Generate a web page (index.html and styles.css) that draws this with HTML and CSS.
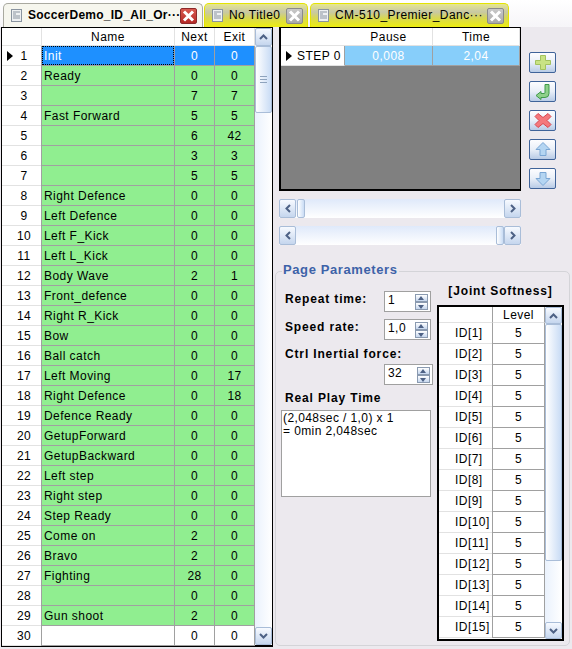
FILE: index.html
```html
<!DOCTYPE html>
<html>
<head>
<meta charset="UTF-8">
<title>Action Editor</title>
<link rel="stylesheet" href="styles.css">
</head>
<body>
<div class="tabs">
  <div class="tab tab-active">
    <svg class="doc" width="11" height="13" viewBox="0 0 11 13"><rect x=".5" y=".5" width="10" height="12" fill="#eef0f2" stroke="#8a94a0"/><path d="M2 3h7M2 5h3M2 7h7M2 9h7" stroke="#8a94a0"/></svg>
    <span class="tab-title">SoccerDemo_ID_All_Or···</span>
    <span class="close close-red"><svg width="13" height="12" viewBox="0 0 13 12"><path d="M2 1.500l9 9M11 1.500l-9 9" stroke="#fff" stroke-width="3"/></svg></span>
  </div>
  <div class="tab tab-no">
    <svg class="doc" width="11" height="13" viewBox="0 0 11 13"><rect x=".5" y=".5" width="10" height="12" fill="#eef0f2" stroke="#8a94a0"/><path d="M2 3h7M2 5h3M2 7h7M2 9h7" stroke="#8a94a0"/></svg>
    <span class="tab-title">No Title0</span>
    <span class="close"><svg width="13" height="12" viewBox="0 0 13 12"><path d="M2 1.500l9 9M11 1.500l-9 9" stroke="#fff" stroke-width="3"/></svg></span>
  </div>
  <div class="tab tab-cm">
    <svg class="doc" width="11" height="13" viewBox="0 0 11 13"><rect x=".5" y=".5" width="10" height="12" fill="#eef0f2" stroke="#8a94a0"/><path d="M2 3h7M2 5h3M2 7h7M2 9h7" stroke="#8a94a0"/></svg>
    <span class="tab-title">CM-510_Premier_Danc···</span>
    <span class="close"><svg width="13" height="12" viewBox="0 0 13 12"><path d="M2 1.500l9 9M11 1.500l-9 9" stroke="#fff" stroke-width="3"/></svg></span>
  </div>
</div>

<div class="main">
  <div class="grid page-grid">
    <div class="grid-body">
      <div class="row head"><span class="hcell"></span><span class="cell name">Name</span><span class="cell">Next</span><span class="cell">Exit</span></div>
      <div class="row sel"><span class="hcell"><i class="arrow"></i>1</span><span class="cell name"><b class="focus">Init</b></span><span class="cell">0</span><span class="cell">0</span></div>
      <div class="row"><span class="hcell">2</span><span class="cell name">Ready</span><span class="cell">0</span><span class="cell">0</span></div>
      <div class="row"><span class="hcell">3</span><span class="cell name"></span><span class="cell">7</span><span class="cell">7</span></div>
      <div class="row"><span class="hcell">4</span><span class="cell name">Fast Forward</span><span class="cell">5</span><span class="cell">5</span></div>
      <div class="row"><span class="hcell">5</span><span class="cell name"></span><span class="cell">6</span><span class="cell">42</span></div>
      <div class="row"><span class="hcell">6</span><span class="cell name"></span><span class="cell">3</span><span class="cell">3</span></div>
      <div class="row"><span class="hcell">7</span><span class="cell name"></span><span class="cell">5</span><span class="cell">5</span></div>
      <div class="row"><span class="hcell">8</span><span class="cell name">Right Defence</span><span class="cell">0</span><span class="cell">0</span></div>
      <div class="row"><span class="hcell">9</span><span class="cell name">Left Defence</span><span class="cell">0</span><span class="cell">0</span></div>
      <div class="row"><span class="hcell">10</span><span class="cell name">Left F_Kick</span><span class="cell">0</span><span class="cell">0</span></div>
      <div class="row"><span class="hcell">11</span><span class="cell name">Left L_Kick</span><span class="cell">0</span><span class="cell">0</span></div>
      <div class="row"><span class="hcell">12</span><span class="cell name">Body Wave</span><span class="cell">2</span><span class="cell">1</span></div>
      <div class="row"><span class="hcell">13</span><span class="cell name">Front_defence</span><span class="cell">0</span><span class="cell">0</span></div>
      <div class="row"><span class="hcell">14</span><span class="cell name">Right R_Kick</span><span class="cell">0</span><span class="cell">0</span></div>
      <div class="row"><span class="hcell">15</span><span class="cell name">Bow</span><span class="cell">0</span><span class="cell">0</span></div>
      <div class="row"><span class="hcell">16</span><span class="cell name">Ball catch</span><span class="cell">0</span><span class="cell">0</span></div>
      <div class="row"><span class="hcell">17</span><span class="cell name">Left Moving</span><span class="cell">0</span><span class="cell">17</span></div>
      <div class="row"><span class="hcell">18</span><span class="cell name">Right Defence</span><span class="cell">0</span><span class="cell">18</span></div>
      <div class="row"><span class="hcell">19</span><span class="cell name">Defence Ready</span><span class="cell">0</span><span class="cell">0</span></div>
      <div class="row"><span class="hcell">20</span><span class="cell name">GetupForward</span><span class="cell">0</span><span class="cell">0</span></div>
      <div class="row"><span class="hcell">21</span><span class="cell name">GetupBackward</span><span class="cell">0</span><span class="cell">0</span></div>
      <div class="row"><span class="hcell">22</span><span class="cell name">Left step</span><span class="cell">0</span><span class="cell">0</span></div>
      <div class="row"><span class="hcell">23</span><span class="cell name">Right step</span><span class="cell">0</span><span class="cell">0</span></div>
      <div class="row"><span class="hcell">24</span><span class="cell name">Step Ready</span><span class="cell">0</span><span class="cell">0</span></div>
      <div class="row"><span class="hcell">25</span><span class="cell name">Come on</span><span class="cell">2</span><span class="cell">0</span></div>
      <div class="row"><span class="hcell">26</span><span class="cell name">Bravo</span><span class="cell">2</span><span class="cell">0</span></div>
      <div class="row"><span class="hcell">27</span><span class="cell name">Fighting</span><span class="cell">28</span><span class="cell">0</span></div>
      <div class="row"><span class="hcell">28</span><span class="cell name"></span><span class="cell">0</span><span class="cell">0</span></div>
      <div class="row"><span class="hcell">29</span><span class="cell name">Gun shoot</span><span class="cell">2</span><span class="cell">0</span></div>
      <div class="row blank"><span class="hcell">30</span><span class="cell name"></span><span class="cell">0</span><span class="cell">0</span></div>
    </div>
    <div class="vscroll">
      <span class="sbtn"><svg width="9" height="6" viewBox="0 0 9 6"><path d="M1 5l3.500-3.500L8 5" fill="none" stroke="#4d6185" stroke-width="2"/></svg></span>
      <span class="vthumb"><i></i></span>
      <span class="vtrack"></span>
      <span class="sbtn"><svg width="9" height="6" viewBox="0 0 9 6"><path d="M1 1l3.500 3.500L8 1" fill="none" stroke="#4d6185" stroke-width="2"/></svg></span>
    </div>
  </div>

  <div class="side">
    <div class="step-area">
      <div class="grid step-grid">
        <div class="srow shead"><span class="hcell"></span><span class="cell">Pause</span><span class="cell">Time</span></div>
        <div class="srow ssel"><span class="hcell"><i class="arrow"></i>STEP 0</span><span class="cell">0,008</span><span class="cell">2,04</span></div>
      </div>
      <div class="tools">
        <span class="tool"><svg width="18" height="17" viewBox="0 0 18 17"><path d="M6.500 1.500h5v5h5v4h-5v5h-5v-5h-5v-4h5z" fill="#c9e384" stroke="#a3c25f"/></svg></span>
        <span class="tool"><svg width="18" height="17" viewBox="0 0 18 17"><path d="M11 1.500h4v9q0 4-4 4H7v2l-5-4 5-4v2h3q1 0 1-1z" fill="#8ed08a" stroke="#3f9a4a"/></svg></span>
        <span class="tool"><svg width="18" height="17" viewBox="0 0 18 17"><path d="M4 1.500L9 5.500l5-4 3 3-4 4 4 4-3 3-5-4-5 4-3-3 4-4-4-4z" fill="#f4787c" stroke="#d9474f"/></svg></span>
        <span class="tool"><svg width="18" height="17" viewBox="0 0 18 17"><path d="M9 1.500l7 7h-4v6H6v-6H2z" fill="#b4d5f2" stroke="#7aa6d4"/></svg></span>
        <span class="tool"><svg width="18" height="17" viewBox="0 0 18 17"><path d="M9 15.500l7-7h-4v-6H6v6H2z" fill="#b4d5f2" stroke="#7aa6d4"/></svg></span>
      </div>
    </div>

    <div class="hscroll">
      <span class="sbtn-h"><svg width="6" height="9" viewBox="0 0 6 9"><path d="M5 1L1.500 4.500 5 8" fill="none" stroke="#4d6185" stroke-width="2"/></svg></span>
      <span class="hthumb"></span>
      <span class="htrack"></span>
      <span class="sbtn-h"><svg width="6" height="9" viewBox="0 0 6 9"><path d="M1 1l3.500 3.500L1 8" fill="none" stroke="#4d6185" stroke-width="2"/></svg></span>
    </div>
    <div class="hscroll">
      <span class="sbtn-h"><svg width="6" height="9" viewBox="0 0 6 9"><path d="M5 1L1.500 4.500 5 8" fill="none" stroke="#4d6185" stroke-width="2"/></svg></span>
      <span class="htrack"></span>
      <span class="hthumb"></span>
      <span class="sbtn-h"><svg width="6" height="9" viewBox="0 0 6 9"><path d="M1 1l3.500 3.500L1 8" fill="none" stroke="#4d6185" stroke-width="2"/></svg></span>
    </div>

    <div class="params">
      <div class="legend">Page Parameters</div>
      <div class="params-left">
        <div class="field"><label>Repeat time:</label><div class="spin"><span>1</span><em class="arrows"><i class="up"></i><i class="down"></i></em></div></div>
        <div class="field"><label>Speed rate:</label><div class="spin"><span>1,0</span><em class="arrows"><i class="up"></i><i class="down"></i></em></div></div>
        <label class="wide">Ctrl Inertial force:</label>
        <div class="field end"><div class="spin spin-wide"><span>32</span><em class="arrows"><i class="up"></i><i class="down"></i></em></div></div>
        <label class="wide play">Real Play Time</label>
        <div class="playbox">(2,048sec / 1,0) x 1<br>= 0min 2,048sec</div>
      </div>
      <div class="params-right">
        <div class="joint-title">[Joint Softness]</div>
        <div class="grid joint">
          <div class="joint-body">
            <div class="jrow jhead"><span class="hcell"></span><span class="cell">Level</span></div>
            <div class="jrow"><span class="hcell">ID[1]</span><span class="cell">5</span></div>
            <div class="jrow"><span class="hcell">ID[2]</span><span class="cell">5</span></div>
            <div class="jrow"><span class="hcell">ID[3]</span><span class="cell">5</span></div>
            <div class="jrow"><span class="hcell">ID[4]</span><span class="cell">5</span></div>
            <div class="jrow"><span class="hcell">ID[5]</span><span class="cell">5</span></div>
            <div class="jrow"><span class="hcell">ID[6]</span><span class="cell">5</span></div>
            <div class="jrow"><span class="hcell">ID[7]</span><span class="cell">5</span></div>
            <div class="jrow"><span class="hcell">ID[8]</span><span class="cell">5</span></div>
            <div class="jrow"><span class="hcell">ID[9]</span><span class="cell">5</span></div>
            <div class="jrow"><span class="hcell">ID[10]</span><span class="cell">5</span></div>
            <div class="jrow"><span class="hcell">ID[11]</span><span class="cell">5</span></div>
            <div class="jrow"><span class="hcell">ID[12]</span><span class="cell">5</span></div>
            <div class="jrow"><span class="hcell">ID[13]</span><span class="cell">5</span></div>
            <div class="jrow"><span class="hcell">ID[14]</span><span class="cell">5</span></div>
            <div class="jrow"><span class="hcell">ID[15]</span><span class="cell">5</span></div>
          </div>
          <div class="vscroll">
            <span class="sbtn"><svg width="9" height="6" viewBox="0 0 9 6"><path d="M1 5l3.500-3.500L8 5" fill="none" stroke="#4d6185" stroke-width="2"/></svg></span>
            <span class="jthumb"></span>
            <span class="vtrack"></span>
            <span class="sbtn"><svg width="9" height="6" viewBox="0 0 9 6"><path d="M1 1l3.500 3.500L8 1" fill="none" stroke="#4d6185" stroke-width="2"/></svg></span>
          </div>
        </div>
      </div>
    </div>
  </div>
</div>
</body>
</html>
```
FILE: styles.css
```css
* {
  box-sizing: border-box;
}
body {
  margin: 0;
  width: 572px;
  height: 649px;
  overflow: hidden;
  background: #ece9ee;
  font-family: "Liberation Sans", Arial, sans-serif;
  font-size: 12px;
  letter-spacing: .45px;
  color: #000;
}

/* tabs */
.tabs {
  height: 27px;
  display: flex;
  align-items: flex-end;
  padding-left: 3px;
  background: linear-gradient(#fff, #f6f5f8);
}
.tab {
  height: 24px;
  display: flex;
  align-items: center;
  padding: 0 4px 0 7px;
  border: 1px solid #e4e400;
  border-bottom: none;
  border-radius: 5px 5px 0 0;
  background: linear-gradient(#e6e690, #c8c8a4 35%, #d8d850 62%, #eeee10);
}
.tab-active {
  width: 200px;
  height: 24px;
  margin-right: 1px;
  padding: 0 5px 0 7px;
  border-color: #a9a9a0;
  background: #f6f6ee;
  font-weight: bold;
  letter-spacing: .25px;
}
.tab-no {
  width: 104px;
  margin-right: 2px;
}
.tab-cm {
  width: 199px;
}
.doc {
  flex: none;
  margin-right: 6px;
}
.tab-title {
  flex: 1;
  margin-top: -2px;
  white-space: nowrap;
  overflow: hidden;
}
.close {
  width: 17px;
  height: 16px;
  flex: none;
  display: flex;
  align-items: center;
  justify-content: center;
  border: 1px solid #8a8a8a;
  border-radius: 2px;
  background: linear-gradient(#c9c9c9, #a9a9a9);
}
.close-red {
  border-color: #8c2a2a;
  background: linear-gradient(#d85a50, #b52a25);
}

/* grids */
.main {
  display: flex;
  height: 622px;
}
.grid {
  border: 2px solid #000;
  border-left-width: 1px;
  display: flex;
  background: #fff;
}
.page-grid {
  width: 272px;
  height: 620px;
  flex: none;
  margin-left: 1px;
  border-top-width: 1px;
}
.grid-body {
  width: 253px;
  flex: none;
}
.row {
  display: grid;
  grid-template-columns: 39px 134px 40px 40px;
  height: 20px;
}
.row.head {
  height: 18px;
}
.row .cell {
  background: #90ee90;
}
.row.sel .cell {
  background: #1e90ff;
  color: #fff;
}
.row.blank .cell,
.row.head .cell {
  background: #fff;
}
.cell {
  display: flex;
  align-items: center;
  justify-content: center;
  border-right: 1px solid #a0a0a0;
  border-bottom: 1px solid #a0a0a0;
  white-space: nowrap;
}
.cell.name {
  justify-content: flex-start;
  padding-left: 2px;
  border-left: 1px solid #a0a0a0;
}
.head .cell,
.shead .cell,
.jhead .cell {
  border-color: #e2e2e2;
  justify-content: center;
  padding: 0;
}
.hcell {
  position: relative;
  display: flex;
  align-items: center;
  justify-content: center;
  padding-left: 5px;
  border-bottom: 1px solid #e2e2e2;
  white-space: nowrap;
}
.arrow {
  position: absolute;
  left: 5px;
  top: 5px;
  border-left: 6px solid #000;
  border-top: 5px solid transparent;
  border-bottom: 5px solid transparent;
}
.focus {
  font-weight: normal;
  align-self: stretch;
  flex: 1;
  display: flex;
  align-items: center;
  margin-left: -2px;
  padding-left: 2px;
  outline: 1px dotted #000;
  outline-offset: -1px;
}

/* scrollbars */
.vscroll {
  width: 17px;
  flex: none;
  display: flex;
  flex-direction: column;
  background: linear-gradient(90deg, #eaf2fd, #fff);
}
.sbtn,
.sbtn-h {
  flex: none;
  display: flex;
  align-items: center;
  justify-content: center;
  border: 1px solid #a9bdd8;
  border-radius: 2px;
  background: linear-gradient(#f7faff, #c5d6ee);
}
.sbtn {
  height: 18px;
}
.vthumb {
  height: 67px;
  display: flex;
  align-items: center;
  justify-content: center;
  border: 1px solid #a9bdd8;
  border-radius: 2px;
  background: linear-gradient(90deg, #fff, #c9dcf5);
}
.vthumb i {
  width: 7px;
  height: 7px;
  border-top: 1px solid #8ea3bd;
  border-bottom: 1px solid #8ea3bd;
  background: linear-gradient(#8ea3bd, #8ea3bd) center / 100% 1px no-repeat;
}
.jthumb {
  height: 237px;
  border: 1px solid #a9bdd8;
  border-radius: 2px;
  background: linear-gradient(90deg, #fff, #c9dcf5);
}
.vtrack {
  flex: 1;
}
.side {
  width: 299px;
  padding: 0 0 0 6px;
}
.step-area {
  display: flex;
}
.step-grid {
  width: 242px;
  height: 164px;
  flex: none;
  display: block;
  background: #808080;
  border-width: 1px 1px 2px 2px;
}
.srow {
  display: grid;
  grid-template-columns: 64px 88px 87px;
  height: 20px;
}
.srow.shead {
  height: 18px;
  background: #fff;
}
.srow.shead .cell {
  background: #fff;
}
.ssel .hcell {
  background: #fff;
  padding-left: 16px;
  justify-content: flex-start;
  border-right: 1px solid #a0a0a0;
}
.ssel .cell {
  background: #87cefa;
  color: #fff;
}
.tools {
  width: 27px;
  margin: 25px 0 0 8px;
  display: flex;
  flex-direction: column;
  gap: 8px;
}
.tool {
  height: 21px;
  display: flex;
  align-items: center;
  justify-content: center;
  border: 1px solid #3f6399;
  border-radius: 2px;
  background: linear-gradient(#fdfdff, #e9eff8 50%, #b8cbe6);
}
.hscroll {
  width: 242px;
  height: 19px;
  margin-top: 8px;
  display: flex;
  background: linear-gradient(#dfe9fa, #fff);
}
.sbtn-h {
  width: 17px;
}
.hthumb {
  width: 8px;
  flex: none;
  margin: 0 0 0 1px;
  border: 1px solid #a9bdd8;
  border-radius: 2px;
  background: linear-gradient(90deg, #fff, #c9dcf5);
}
.htrack {
  flex: 1;
}

/* page parameters */
.params {
  position: relative;
  width: 295px;
  height: 375px;
  margin: 26px 0 0 -4px;
  padding: 12px 0 0 5px;
  display: flex;
  border: 1px solid #d4d4d8;
  border-radius: 5px;
}
.legend {
  position: absolute;
  left: 6px;
  top: -10px;
  padding: 0 1px;
  background: #ece9ee;
  color: #3d62a8;
  font-weight: bold;
  font-size: 13px;
  letter-spacing: .6px;
}
label {
  font-weight: bold;
  white-space: nowrap;
  letter-spacing: .85px;
}
.params-left {
  width: 156px;
  flex: none;
  padding-top: 7px;
}
.field {
  height: 28px;
  display: flex;
  justify-content: space-between;
  padding-right: 6px;
}
.field label {
  margin: 1px 0 0 4px;
}
.field.end {
  justify-content: flex-end;
  padding-right: 4px;
  height: 27px;
}
.wide {
  display: block;
  margin-left: 4px;
  height: 17px;
}
.play {
  height: 19px;
}
.spin {
  width: 47px;
  height: 21px;
  display: flex;
  justify-content: space-between;
  padding: 1px 2px 0 3px;
  border: 1px solid #a0a0a0;
  background: #fff;
}
.spin-wide {
  width: 49px;
}
.arrows {
  width: 13px;
  display: flex;
  flex-direction: column;
  margin: 1px 0;
}
.arrows i {
  flex: 1;
  border: 1px solid #8a9ab0;
  background: linear-gradient(#fff, #c5d6ee);
  position: relative;
}
.arrows .up::after,
.arrows .down::after {
  content: "";
  position: absolute;
  left: 2px;
  border-left: 3.5px solid transparent;
  border-right: 3.5px solid transparent;
}
.arrows .up::after {
  top: 1px;
  border-bottom: 4px solid #4d6185;
}
.arrows .down::after {
  top: 2px;
  border-top: 4px solid #4d6185;
}
.playbox {
  width: 150px;
  height: 87px;
  padding: 1px 0 0 1px;
  border: 1px solid #a0a0a0;
  background: #fff;
  line-height: 13px;
  letter-spacing: .4px;
}
.params-right {
  width: 127px;
  flex: none;
}
.joint-title {
  height: 21px;
  text-align: center;
  font-weight: bold;
  letter-spacing: .85px;
}
.joint {
  width: 127px;
  height: 336px;
  border-width: 2px;
}
.joint-body {
  width: 106px;
  flex: none;
  overflow: hidden;
}
.jrow {
  display: grid;
  grid-template-columns: 53px 53px;
  height: 21px;
}
.jhead {
  height: 16px;
}
.joint .hcell {
  justify-content: flex-start;
  padding-left: 16px;
}
.joint .cell {
  border-left: 1px solid #a0a0a0;
  border-right: 1px solid #a0a0a0;
}
.joint .sbtn {
  height: 17px;
}
```
